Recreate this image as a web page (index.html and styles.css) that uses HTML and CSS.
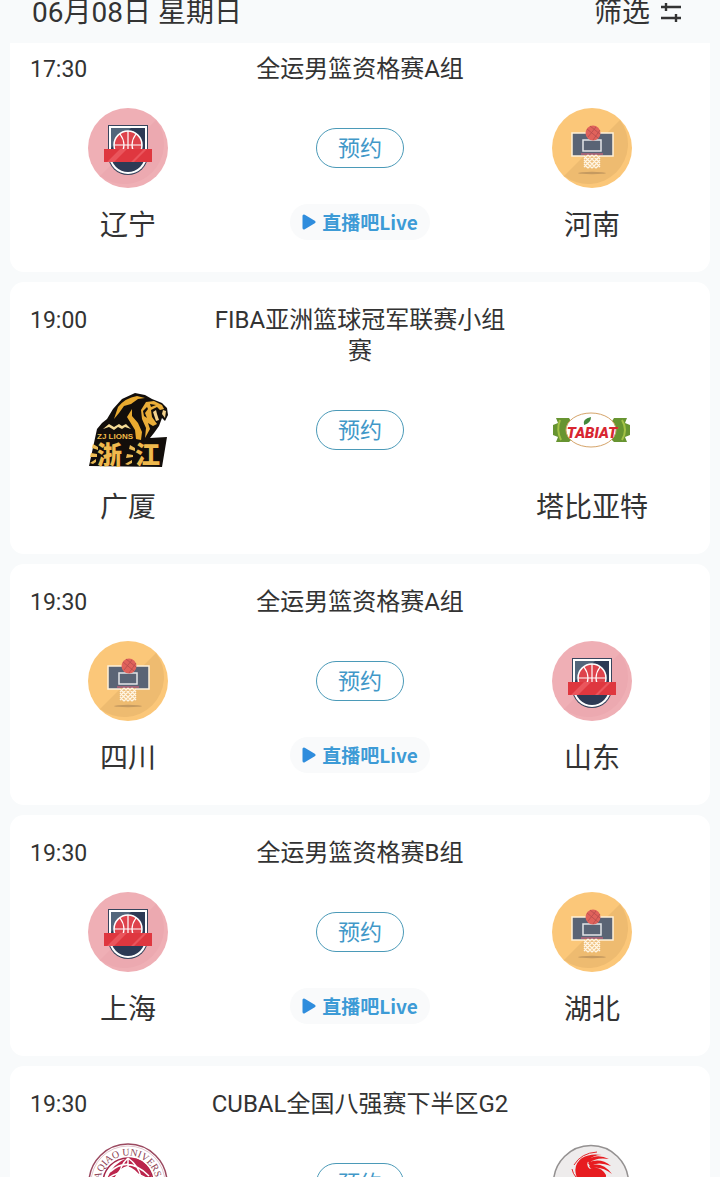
FILE: index.html
```html
<!DOCTYPE html>
<html lang="zh-CN">
<head>
  <meta charset="UTF-8">
  <title>赛程</title>
  <meta name="viewport" content="width=device-width, initial-scale=1.0">
  <link rel="stylesheet" href="styles.css">
</head>
<body>

  <!-- shared logos -->
  <svg class="sprite" aria-hidden="true">
    <symbol id="shield" viewBox="0 0 80 80">
      <circle cx="40" cy="40" r="40" fill="#efafb5"/>
      <path d="M12 68A40 40 0 0 0 68 12Z" fill="#eca9b0"/>
      <path d="M20 17H60V47A20 20 0 0 1 20 47Z" fill="#38455d"/>
      <path d="M21 18H59V47A19 19 0 0 1 21 47Z" fill="#fff"/>
      <path d="M23 20H57V47A17 17 0 0 1 23 47Z" fill="#2d3a55"/>
      <path d="M23 20H43L23 40Z" fill="#53667b"/>
      <circle cx="40" cy="37" r="14" fill="#de434c" stroke="#fff" stroke-width="1.5"/>
      <path d="M40 23V50M26 37H54M32 26Q40 37 32 48M48 26Q40 37 48 48" fill="none" stroke="#fff" stroke-width="1.2"/>
      <path d="M16 41H64V54H16Z" fill="#df373f"/>
      <path d="M19 54L32 41H39L26 54ZM43 54L56 41H59L46 54Z" fill="#ea555c"/>
    </symbol>
    <symbol id="hoop" viewBox="0 0 80 80">
      <circle cx="40" cy="40" r="40" fill="#fbc779"/>
      <path d="M12 68A40 40 0 0 0 68 12Z" fill="#eebb70"/>
      <rect x="20" y="25" width="41" height="23" fill="#5a6475" stroke="#fff1d8" stroke-width="1.5"/>
      <rect x="31" y="32" width="18" height="11" fill="none" stroke="#e4e5e8" stroke-width="1.5"/>
      <circle cx="41" cy="25" r="7.5" fill="#e0625b"/>
      <path d="M35 21L46 30M38 18L48 26M36 29L44 19M41 32L48 22" stroke="#b54d4e" stroke-width=".8"/>
      <path d="M29 46H51" stroke="#bd657a" stroke-width="1.5"/>
      <path d="M32 47H48V60H32Z" fill="#edbe7c"/>
      <path d="M32 48L44 60M36 47L48 59M40 47L48 55M44 47L48 51M32 52L40 60M32 56L36 60M48 48L36 60M44 47L32 59M40 47L32 55M36 47L32 51M48 52L40 60M48 56L44 60" stroke="#fff5e3" stroke-width="1.3"/>
      <ellipse cx="40" cy="65" rx="14" ry="1.2" fill="#c59a60"/>
    </symbol>
    <symbol id="play" viewBox="0 0 14 16">
      <path d="M2 2V14L12 8Z" fill="#2f8ddd" stroke="#2f8ddd" stroke-width="3" stroke-linejoin="round"/>
    </symbol>
  </svg>

  <div class="app">
    <header class="top">
      <h1>06月08日 星期日</h1>
      <button class="filter" type="button">
        筛选
        <svg width="20" height="20" viewBox="0 0 20 20"><path d="M0 4H20M5 0V8M0 15H20M15 11V19" stroke="#333" stroke-width="2.4"/></svg>
      </button>
    </header>

    <main class="list">
      <article class="card">
        <div class="head"><time>17:30</time><h2>全运男篮资格赛A组</h2></div>
        <div class="match">
          <div class="team"><svg><use href="#shield"/></svg><span>辽宁</span></div>
          <div class="mid">
            <button class="book" type="button">预约</button>
            <a class="live" href="#"><svg><use href="#play"/></svg>直播吧Live</a>
          </div>
          <div class="team"><svg><use href="#hoop"/></svg><span>河南</span></div>
        </div>
      </article>

      <article class="card">
        <div class="head"><time>19:00</time><h2>FIBA亚洲篮球冠军联赛小组赛</h2></div>
        <div class="match">
          <div class="team">
            <svg viewBox="0 0 80 80">
              <path d="M9 39L14 33L19 29L25 19L34 9L47 3L57 5L64 9L74 13L79 18L80 25L77 31L74 28L71 36L66 43L62 48L79 47L74 77L1 76Z" fill="#120e0b"/>
              <path d="M30 17Q37 8 49 6L57 8L50 9L43 14L36 16L31 23L26 29ZM39 27L44 19L44 26L50 33L54 42L53 50L48 49L47 40Z" fill="#e9aa2f"/>
              <path d="M58 12L66 11L74 15L76 19L72 20L69 17L63 20L64 27L69 34L65 36L60 33L62 39L57 48L58 38L54 29L53 20Z" fill="#eaae39"/>
              <path d="M55 21L59 17L60 19L57 23L59 28L56 26ZM62 14L68 15L63 17Z" fill="#120e0b"/>
              <path d="M65 22L68 20L69 24L71 30L68 31ZM75 20L78 21L77 28L74 24Z" fill="#f3d28d"/>
              <path d="M15 39L21 34L26 37L31 34L34 36L38 34L43 39L37 37L34 39L30 37L26 40L21 37Z" fill="#f5db96"/>
              <path d="M5 54L10 57V60L4 58ZM3 63L9 64V67L2 67ZM2 73L8 69V72L5 74ZM42 55L47 58V61L41 59ZM39 64L45 65V67L38 68ZM37 74L44 70V73L40 75Z" fill="#ebbb54"/>
              <text x="9" y="49" class="lion-en">ZJ LIONS</text>
              <text x="9" y="74" class="lion-cn">浙</text>
              <text x="47" y="74" class="lion-cn">江</text>
            </svg>
            <span>广厦</span>
          </div>
          <div class="mid">
            <button class="book" type="button">预约</button>
          </div>
          <div class="team">
            <svg viewBox="0 0 80 80">
              <path d="M4 28H17L22 36V47L17 52H4L6 47L1 45V35L6 33Z" fill="#679431"/>
              <path d="M75 28H62L57 36V47L62 52H75L73 47L78 45V35L73 33Z" fill="#679431"/>
              <path d="M8 30Q4 40 9 50M70 30Q76 40 70 50" fill="none" stroke="#a3c246" stroke-width="2"/>
              <ellipse cx="39" cy="40" rx="25" ry="17" fill="#fff" stroke="#d5a46a"/>
              <path d="M32 35Q30 29 39 27Q39 33 32 35Z" fill="#43893b"/>
              <text x="40" y="48" class="tabiat-text">TABIAT</text>
            </svg>
            <span>塔比亚特</span>
          </div>
        </div>
      </article>

      <article class="card">
        <div class="head"><time>19:30</time><h2>全运男篮资格赛A组</h2></div>
        <div class="match">
          <div class="team"><svg><use href="#hoop"/></svg><span>四川</span></div>
          <div class="mid">
            <button class="book" type="button">预约</button>
            <a class="live" href="#"><svg><use href="#play"/></svg>直播吧Live</a>
          </div>
          <div class="team"><svg><use href="#shield"/></svg><span>山东</span></div>
        </div>
      </article>

      <article class="card">
        <div class="head"><time>19:30</time><h2>全运男篮资格赛B组</h2></div>
        <div class="match">
          <div class="team"><svg><use href="#shield"/></svg><span>上海</span></div>
          <div class="mid">
            <button class="book" type="button">预约</button>
            <a class="live" href="#"><svg><use href="#play"/></svg>直播吧Live</a>
          </div>
          <div class="team"><svg><use href="#hoop"/></svg><span>湖北</span></div>
        </div>
      </article>

      <article class="card">
        <div class="head"><time>19:30</time><h2>CUBAL全国八强赛下半区G2</h2></div>
        <div class="match">
          <div class="team">
            <svg viewBox="0 0 80 80">
              <circle cx="40" cy="40" r="39" fill="#fff" stroke="#9b4960" stroke-width="1.5"/>
              <circle cx="40" cy="40" r="37" fill="none" stroke="#c28b99" stroke-width=".5"/>
              <circle cx="40" cy="40" r="25" fill="#fff" stroke="#a32749" stroke-width="1.5"/>
              <path d="M39 15Q54 13 62 27L65 40H56Q50 26 39 23Q28 26 25 40H18Q22 22 39 15Z" fill="#bb254c"/>
              <path d="M22 29Q40 12 61 33M18 37Q38 20 64 39M40 15Q29 25 31 43M40 15Q54 25 54 43M40 15V43" fill="none" stroke="#fff" stroke-width="1.5"/>
              <path id="ring" d="M20 60A28 28 0 1 1 60 60" fill="none"/>
              <text class="ring-text"><textPath href="#ring" startOffset="50%">HUAQIAO UNIVERSITY</textPath></text>
            </svg>
          </div>
          <div class="mid">
            <button class="book" type="button">预约</button>
          </div>
          <div class="team">
            <svg viewBox="0 0 80 80">
              <circle cx="39" cy="40" r="37.5" fill="#eeecec" stroke="#949191" stroke-width="1.5"/>
              <path d="M25 35Q20 22 30 15Q38 10 50 12Q41 12 37 17Q33 22 38 26Q48 22 54 32Q54 48 34 60Q44 48 38 40Q30 40 25 35Z" fill="#e71c20"/>
              <path d="M35 17Q45 10 57 16Q44 14 37 20ZM36 20Q48 14 59 23Q46 18 38 23ZM37 23Q50 18 60 31Q48 22 39 26Z" fill="#e71c20"/>
              <path d="M22 22Q29 10 45 9M20 26Q22 36 32 38" fill="none" stroke="#e2272b"/>
            </svg>
          </div>
        </div>
      </article>
    </main>
  </div>

</body>
</html>
```
FILE: styles.css
```css
* { box-sizing: border-box; }
body { margin: 0; background: #f8fafb; color: #333; font-family: Roboto, "Noto Sans CJK SC", sans-serif; }
h1, h2 { margin: 0; font-weight: 400; }
button { font-family: inherit; cursor: pointer; }
.sprite { position: absolute; width: 0; height: 0; }

.app { height: 100vh; overflow-y: auto; scrollbar-width: none; }

.top { display: flex; justify-content: space-between; padding: 1px 39px 18px 32px; }
.top h1 { font-size: 28px; line-height: 24px; }
.filter { display: flex; align-items: center; gap: 11px; padding: 0; border: 0; background: none; color: #333; font-size: 28px; line-height: 24px; }

.list { display: flex; flex-direction: column; gap: 10px; padding: 0 10px; }
.card { padding: 23px 0 30px; border-radius: 14px; background: #fff; }
.card:first-child { padding-top: 11px; border-radius: 0 0 14px 14px; }

.head { display: grid; grid-template-columns: 1fr 304px 1fr; font-size: 24px; line-height: 31px; }
.head time { padding-left: 20px; font-size: 23px; }
.head h2 { font-size: 24px; text-align: center; }

.match { display: grid; grid-template-columns: 236px 1fr 236px; margin-top: 23px; }
.team { display: flex; flex-direction: column; align-items: center; gap: 22px; font-size: 28px; line-height: 32px; }
.team svg { width: 80px; height: 80px; }

.mid { display: flex; flex-direction: column; align-items: center; gap: 36px; padding-top: 20px; }
.book { width: 88px; height: 40px; padding: 2px 0 0; border: 1px solid #4b9ab8; border-radius: 20px; background: #fff; color: #4198c8; font-size: 22px; line-height: 36px; }
.live { display: flex; align-items: center; justify-content: center; gap: 6px; width: 140px; height: 36px; border-radius: 18px; background: #f9fafb; color: #3d9bd6; font-family: "Noto Sans CJK SC", sans-serif; font-size: 19px; line-height: 36px; font-weight: 700; text-decoration: none; }
.live svg { width: 14px; height: 16px; }

.lion-en { fill: #efba48; font: 700 8px "Liberation Sans", sans-serif; }
.lion-cn { fill: #efb94d; font: 900 25px "Noto Sans CJK SC", sans-serif; }
.tabiat-text { fill: #d82631; font: italic 900 15px Roboto, sans-serif; text-anchor: middle; }
.ring-text { fill: #8b3d51; font: 10px "Liberation Serif", serif; text-anchor: middle; }
```
